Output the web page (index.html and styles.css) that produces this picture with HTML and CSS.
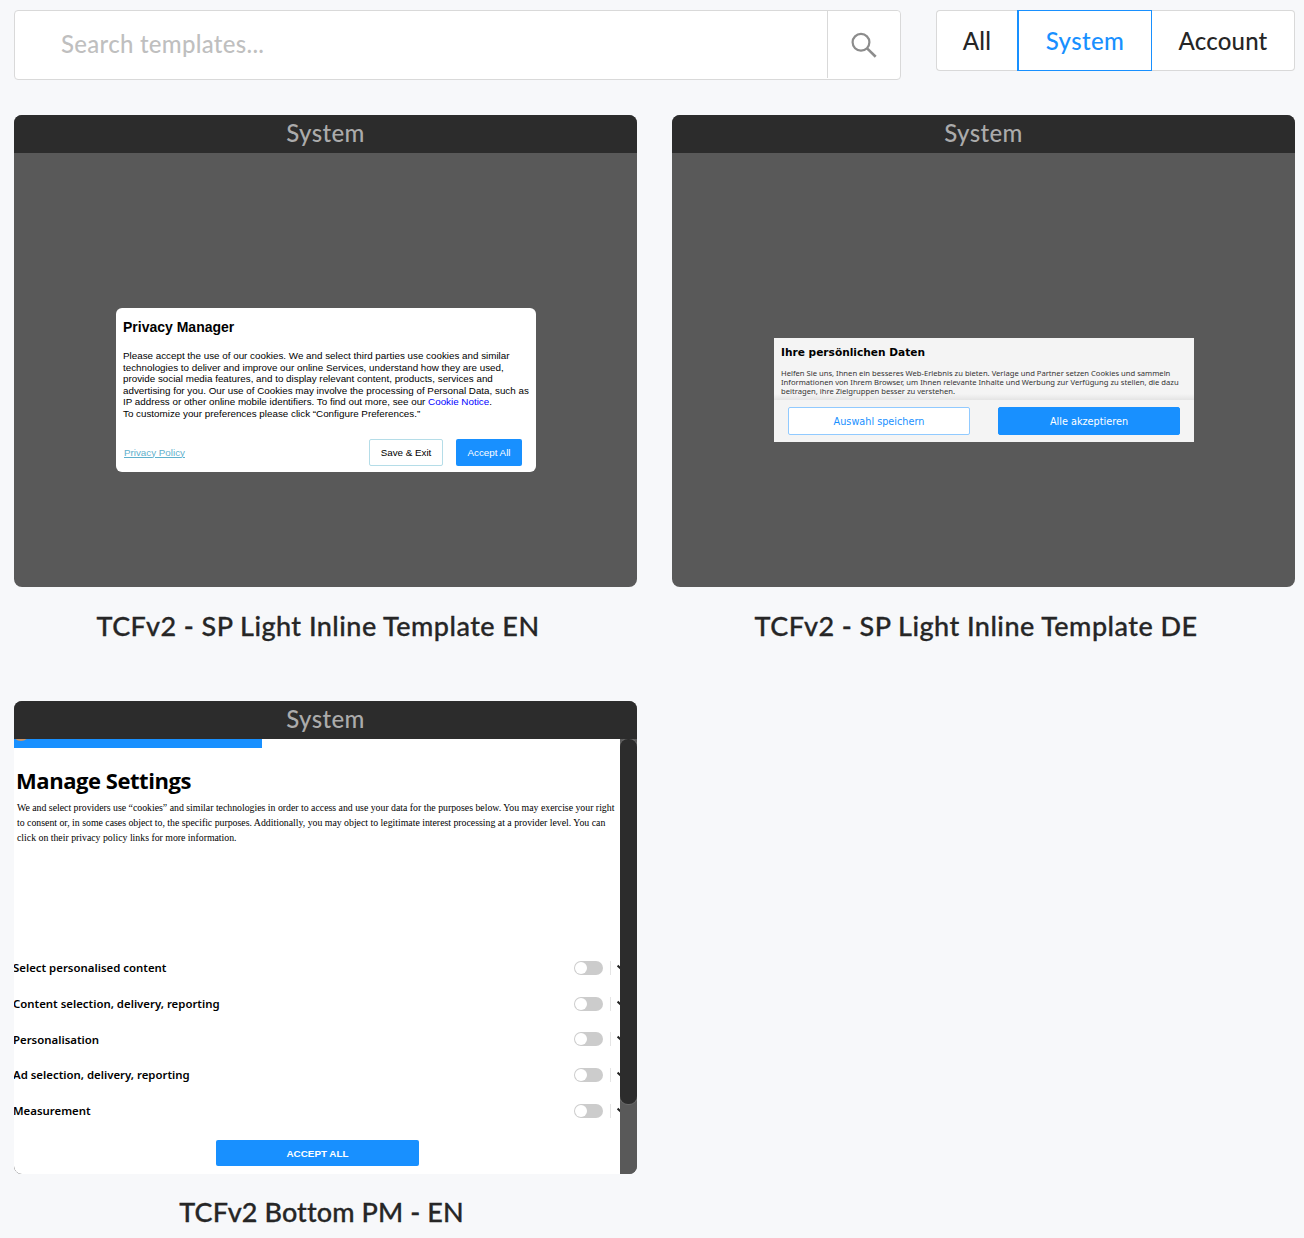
FILE: index.html
```html
<!DOCTYPE html>
<html lang="en">
<head>
<meta charset="utf-8">
<title>Templates</title>
<link rel="stylesheet" href="styles.css">
</head>
<body>
<header class="toolbar">
  <div class="search">
    <div class="search-field"><span>Search templates...</span></div>
    <button class="search-button" aria-label="Search">
      <svg width="28" height="28" viewBox="0 0 28 28" fill="none" stroke="#8c8c8c" stroke-width="2.2"><circle cx="11" cy="11.3" r="8.4"/><path d="M17.1 17.4L25.7 25.8" stroke-width="2.6"/></svg>
    </button>
  </div>
  <nav class="filters">
    <button class="filter filter-all"><span>All</span></button>
    <button class="filter filter-system active"><span>System</span></button>
    <button class="filter filter-account"><span>Account</span></button>
  </nav>
</header>
<main class="grid">
  <article class="template">
    <div class="card">
      <div class="card-head"><span>System</span></div>
      <div class="preview">
        <section class="pm">
          <h2>Privacy Manager</h2>
          <p>Please accept the use of our cookies. We and select third parties use cookies and similar<br>technologies to deliver and improve our online Services, understand how they are used,<br>provide social media features, and to display relevant content, products, services and<br>advertising for you. Our use of Cookies may involve the processing of Personal Data, such as<br>IP address or other online mobile identifiers. To find out more, see our <a>Cookie Notice</a>.<br>To customize your preferences please click “Configure Preferences.”</p>
          <div class="pm-actions">
            <a class="policy">Privacy Policy</a>
            <button class="pm-save">Save &amp; Exit</button>
            <button class="pm-accept">Accept All</button>
          </div>
        </section>
      </div>
    </div>
    <h3 class="title">TCFv2 - SP Light Inline Template EN</h3>
  </article>
  <article class="template">
    <div class="card">
      <div class="card-head"><span>System</span></div>
      <div class="preview">
        <section class="daten">
          <div class="daten-text">
            <h2>Ihre persönlichen Daten</h2>
            <p>Helfen Sie uns, Ihnen ein besseres Web-Erlebnis zu bieten. Verlage und Partner setzen Cookies und sammeln<br>Informationen von Ihrem Browser, um Ihnen relevante Inhalte und Werbung zur Verfügung zu stellen, die dazu<br>beitragen, ihre Zielgruppen besser zu verstehen.</p>
          </div>
          <div class="daten-actions">
            <button class="daten-save">Auswahl speichern</button>
            <button class="daten-accept">Alle akzeptieren</button>
          </div>
        </section>
      </div>
    </div>
    <h3 class="title">TCFv2 - SP Light Inline Template DE</h3>
  </article>
  <article class="template">
    <div class="card card-tall">
      <div class="card-head"><span>System</span></div>
      <div class="settings">
        <div class="settings-page">
          <div class="banner"><i class="cookie"></i></div>
          <h2>Manage Settings</h2>
          <p>We and select providers use “cookies” and similar technologies in order to access and use your data for the purposes below. You may exercise your right<br>to consent or, in some cases object to, the specific purposes. Additionally, you may object to legitimate interest processing at a provider level. You can<br>click on their privacy policy links for more information.</p>
          <ul class="purposes">
            <li><span>Select personalised content</span><i class="toggle"></i><i class="rule"></i><svg width="8" height="8" viewBox="0 0 8 8"><path d="M.6 1.6L4.5 5.2L8.4 1.6" fill="none" stroke="#222" stroke-width="2"/></svg></li>
            <li><span>Content selection, delivery, reporting</span><i class="toggle"></i><i class="rule"></i><svg width="8" height="8" viewBox="0 0 8 8"><path d="M.6 1.6L4.5 5.2L8.4 1.6" fill="none" stroke="#222" stroke-width="2"/></svg></li>
            <li><span>Personalisation</span><i class="toggle"></i><i class="rule"></i><svg width="8" height="8" viewBox="0 0 8 8"><path d="M.6 1.6L4.5 5.2L8.4 1.6" fill="none" stroke="#222" stroke-width="2"/></svg></li>
            <li><span>Ad selection, delivery, reporting</span><i class="toggle"></i><i class="rule"></i><svg width="8" height="8" viewBox="0 0 8 8"><path d="M.6 1.6L4.5 5.2L8.4 1.6" fill="none" stroke="#222" stroke-width="2"/></svg></li>
            <li><span>Measurement</span><i class="toggle"></i><i class="rule"></i><svg width="8" height="8" viewBox="0 0 8 8"><path d="M.6 1.6L4.5 5.2L8.4 1.6" fill="none" stroke="#222" stroke-width="2"/></svg></li>
          </ul>
          <button class="accept-all">ACCEPT ALL</button>
        </div>
        <div class="scrollbar"><div class="thumb"></div></div>
      </div>
    </div>
    <h3 class="title title-last">TCFv2 Bottom PM - EN</h3>
  </article>
</main>
</body>
</html>
```
FILE: styles.css
```css
* { box-sizing: border-box; }
body {
  margin: 0;
  padding: 10px 9px 0 14px;
  background: #f7f8fa;
  color: #262626;
  font-family: Lato, "Liberation Sans", sans-serif;
  height: 1238px;
  overflow: hidden;
}
button { font: inherit; color: inherit; letter-spacing: inherit; padding: 0; margin: 0; background: #fff; border: 0; }
h2, h3, p, ul { margin: 0; padding: 0; list-style: none; }
span, p, h2, h3 { white-space: nowrap; }

.toolbar { display: flex; justify-content: space-between; align-items: flex-start; height: 105px; }
.search { display: flex; width: 887px; height: 70px; background: #fff; border: 1px solid #d9d9d9; border-radius: 4px; }
.search-field { flex: 1; display: flex; align-items: center; padding-left: 46px; padding-bottom: 4px; color: #bfbfbf; font-size: 24px; font-weight: 500; letter-spacing: 0.28px; }
.search-button { width: 73px; height: 67px; border-left: 1px solid #d9d9d9; border-radius: 0 4px 4px 0; }
.search-button svg { display: block; margin: 0 auto; }
.filters { display: flex; width: 359px; height: 61px; font-size: 24px; font-weight: 500; letter-spacing: 0.2px; }
.filter { border: 1px solid #d9d9d9; }
.filter-all { width: 81px; border-right: 0; border-radius: 4px 0 0 4px; }
.filter-system { width: 135px; letter-spacing: 0.35px; }
.filter-account { width: 143px; border-left: 0; border-radius: 0 4px 4px 0; }
.filter.active { border-color: #1890ff; border-left-width: 2px; color: #1890ff; }

.grid { display: grid; grid-template-columns: 623px 623px; column-gap: 35px; grid-auto-rows: 586px; }
.card { height: 472px; border-radius: 8px; overflow: hidden; background: #595959; display: flex; flex-direction: column; }
.card-tall { height: 473px; }
.card-head { height: 38px; flex: none; background: #2c2c2c; color: #ababab; text-align: center; font-size: 24px; line-height: 36px; font-weight: 500; letter-spacing: 0.35px; }
.preview { flex: 1; display: flex; flex-direction: column; align-items: center; }
.title { padding-right: 15px; margin-top: 19px; text-align: center; font-size: 27px; line-height: 40px; font-weight: 500; letter-spacing: 0.46px; -webkit-text-stroke: 0.3px #262626; }
.title-last { padding-right: 8px; margin-top: 18px; letter-spacing: 0.1px; }

.pm { margin: 155px 0 0 1px; width: 420px; height: 164px; background: #fff; border-radius: 6px; padding: 9px 7px 0; color: #000; font-family: "Liberation Sans", Arial, sans-serif; }
.pm h2 { font-size: 14px; line-height: 20px; }
.pm p { margin-top: 13px; font-size: 9.82px; line-height: 11.6px; }
.pm p a { color: #00f; }
.pm-actions { display: flex; margin-top: 19px; font-size: 9.8px; align-items: center; }
.policy { flex: 1; padding-left: 1px; color: #5fb0cc; text-decoration: underline; }
.pm-save { width: 74px; height: 27px; border: 1px solid #b5dde8; border-radius: 2px; }
.pm-accept { width: 66px; height: 27px; margin: 0 7px 0 13px; background: #1890ff; color: #fff; border-radius: 2px; }

.daten { margin: 185px 0 0 1px; width: 420px; height: 104px; background: #f4f4f4; color: #000; font-family: "DejaVu Sans", sans-serif; }
.daten-text { height: 62px; padding: 7px 7px 0; background: linear-gradient(#f4f4f4 56px, #e4e4e4 62px); }
.daten h2 { font-size: 10.6px; line-height: 15px; }
.daten p { margin-top: 9px; font-family: "Noto Sans", sans-serif; font-size: 7.63px; line-height: 9px; color: #333; }
.daten-actions { display: flex; gap: 28px; padding: 7px 14px; font-size: 9.7px; }
.daten-actions button { flex: 1; height: 28px; border-radius: 2px; border: 1px solid #91caff; color: #1890ff; }
.daten-actions .daten-accept { background: #1890ff; border-color: #1890ff; color: #fff; }

.settings { flex: 1; display: flex; background: #595959; }
.settings-page { width: 606px; background: #fff; overflow: hidden; color: #000; display: flex; flex-direction: column; }
.banner { width: 248px; height: 9px; background: #1890ff; overflow: hidden; }
.cookie { display: block; width: 18px; height: 18px; margin: -16px 0 0 -2px; border-radius: 50%; background: #c99467; }
.settings-page h2 { margin: 16px 0 0 2px; font-family: "Open Sans", sans-serif; font-size: 22px; line-height: 32px; font-weight: 700; letter-spacing: -0.45px; }
.settings-page p { margin: 4px 0 0 3px; font-family: "Liberation Serif", serif; font-size: 9.8px; line-height: 15px; }
.purposes { margin-top: 105px; font-family: "Noto Sans", sans-serif; font-size: 11.4px; font-weight: 600; }
.purposes li { display: flex; align-items: center; height: 35.7px; }
.purposes span { flex: 1; margin-left: -1px; }
.toggle { width: 29px; height: 14px; border-radius: 7px; background: #ccc; padding: 1px; }
.toggle::before { content: ""; display: block; width: 12px; height: 12px; border-radius: 50%; background: #fff; }
.rule { width: 1px; height: 14px; margin: 0 6px 0 7px; background: #e5e5e5; }
.purposes svg { width: 8px; margin-right: -5px; flex: none; }
.accept-all { width: 203px; height: 26px; margin: 12px 0 0 202px; flex: none; background: #1890ff; border-radius: 2px; color: #fff; font: bold 9.85px "Liberation Sans", sans-serif; }
.scrollbar { width: 17px; }
.thumb { height: 365px; border-radius: 8px; background: #2c2c2c; box-shadow: 0 0 0 1px #686868; clip-path: inset(0 0 -1px 0); }
```
